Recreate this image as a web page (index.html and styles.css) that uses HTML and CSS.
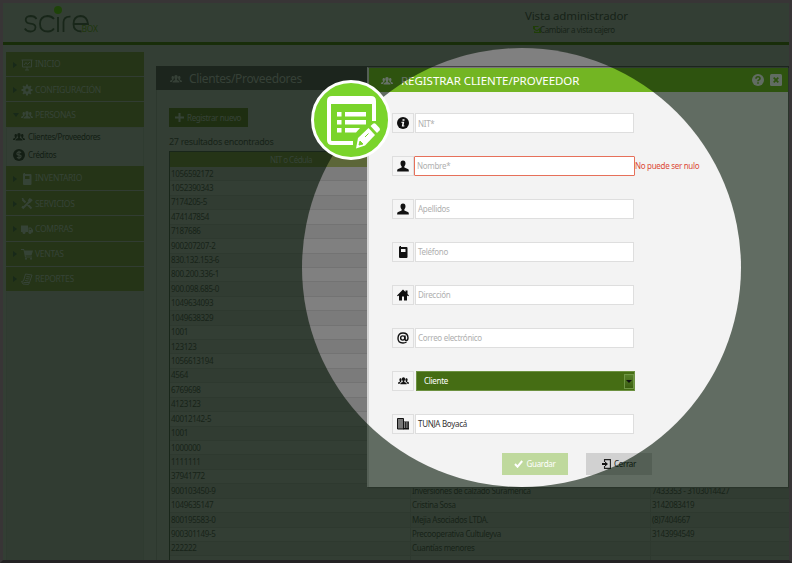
FILE: index.html
```
<!DOCTYPE html>
<html lang="es">
<head>
<meta charset="utf-8">
<title>Scire Box</title>
<link rel="stylesheet" href="styles.css">
</head>
<body>
<svg width="0" height="0" class="defs">
  <defs>
    <symbol id="group" viewBox="0 0 24 18"><path d="M12 1c2.300 0 3.400 1.700 3.400 4 0 2-.8 3.200-1.600 4v2l4 2c1 .6 1.200 1.500 1.200 3H5c0-1.500.2-2.400 1.200-3l4-2V9c-.8-.8-1.600-2-1.600-4 0-2.300 1.100-4 3.400-4zM5.500 3c1.700 0 2.500 1.200 2.500 3.200 0 1.500-.5 2.300-1 3v1.500L4.500 12.500C3.900 13 4 14 4 15H0c0-2 .2-2.700 1-3.100l3-1.400V9.200c-.6-.7-1-1.500-1-3C3 4.200 3.800 3 5.500 3zm13 0C16.800 3 16 4.200 16 6.200c0 1.500.5 2.300 1 3v1.500l2.500 1.800c.6.500.5 1.500.5 2.500h4c0-2-.2-2.700-1-3.100l-3-1.400V9.200c.6-.7 1-1.500 1-3C21 4.200 20.200 3 18.500 3z"/></symbol>
    <symbol id="user" viewBox="0 0 24 24"><path d="M12 1c3.500 0 5 2.400 5 5.500 0 2.600-1 5-2.300 6.200V15l7 3c1.600.8 2 2 2 5H.3c0-3 .4-4.200 2-5l7-3v-2.300C8 11.500 7 9.100 7 6.500 7 3.400 8.500 1 12 1z"/></symbol>
    <symbol id="phone" viewBox="0 0 24 24"><path fill-rule="evenodd" d="M5 0h3v2h11q2 0 2 2v18q0 2-2 2H6q-2 0-2-2V2h1zM8 6v6h9V6z"/></symbol>
  </defs>
</svg>
<div class="screen">
  <header class="top">
    <svg class="logo" width="78" height="32" viewBox="0 0 78 32">
      <g class="logo-line"><path d="M12.500 13Q11 10 6.500 10Q1.500 10.200 1.700 14Q2 17.300 6.500 17.600Q11.700 18 11.500 21.500Q11 25.500 6.500 25.500Q2.500 25.500 .8 22.500M30 13Q27.500 10 23.500 10Q16 10.500 16 17.700Q16 25.500 24 25.500Q28 25.500 30 22.500M34 11V26M39.500 26V16Q40 10.200 46.500 10.700M50 18H64Q63 10 56.500 10Q49.500 10.500 49.500 18Q49.500 25.500 57.500 25.500"/></g>
      <circle class="logo-dot" cx="34" cy="4" r="4"/><text class="logo-box" x="57.500" y="26">BOX</text>
    </svg>
    <div class="view">
      <div class="view-name"><span class="t">Vista administrador</span></div>
      <div class="view-switch"><svg width="8" height="8" viewBox="0 0 8 8"><path d="M0 0h6l-1 1H2v2l2 1 4-3v6H1V5l2 1h3V4L4 5.500 0 3z"/></svg><span class="t">Cambiar a vista cajero</span></div>
    </div>
  </header>
  <div class="body">
    <nav class="side">
      <div class="item"><i class="arrow"></i><svg class="ic" viewBox="0 0 24 24"><path class="ln" d="M1 2h22M3 2v14h18V2M12 16v6M8 22h8M6 12l4-5 3 4 5-5"/></svg><span class="t">INICIO</span></div>
      <div class="item"><i class="arrow"></i><svg class="ic" viewBox="0 0 24 24"><circle class="gear" cx="12" cy="12" r="5.500"/><path class="teeth" d="M12 1v5M12 18v5M1 12h5M18 12h5M4.200 4.200l3.500 3.500M16.300 16.300l3.500 3.500M4.200 19.800l3.500-3.500M16.300 7.700l3.500-3.500"/></svg><span class="t">CONFIGURACIÓN</span></div>
      <div class="item"><i class="arrow open"></i><svg class="ic"><use href="#group"/></svg><span class="t">PERSONAS</span></div>
      <div class="sub">
        <div class="subitem"><svg class="ic"><use href="#group"/></svg><span class="t">Clientes/Proveedores</span></div>
        <div class="subitem"><svg class="ic coin" viewBox="0 0 12 12"><circle cx="6" cy="6" r="6"/><path d="M8 4Q7.500 2.900 6 2.900T4 4.300T6 6T8 7.700T6 9.100T4 8M6 1.800V10.200"/></svg><span class="t">Créditos</span></div>
      </div>
      <div class="item"><i class="arrow"></i><svg class="ic"><use href="#phone"/></svg><span class="t">INVENTARIO</span></div>
      <div class="item"><i class="arrow"></i><svg class="ic" viewBox="0 0 24 24"><path class="tool" d="M3 3l6 6M13 13l8 8M3 21L18 6M22 3l-4 4-2-2 3-4M2 2l3-1M6 21l-4-4"/></svg><span class="t">SERVICIOS</span></div>
      <div class="item"><i class="arrow"></i><svg class="ic" viewBox="0 0 24 24"><path d="M0 5h14v13H0z"/><path fill-rule="evenodd" d="M15 9h5l4 5v5h-9zM17 11v3h4l-2-3z"/><circle cx="6" cy="19" r="3"/><circle cx="18" cy="19" r="3"/></svg><span class="t">COMPRAS</span></div>
      <div class="item"><i class="arrow"></i><svg class="ic" viewBox="0 0 24 24"><path d="M0 2h6l1 3h17l-3 10H9l1 2h12v2H8L5 4H0z"/><circle cx="10" cy="21.500" r="2"/><circle cx="20" cy="21.500" r="2"/></svg><span class="t">VENTAS</span></div>
      <div class="item"><i class="arrow"></i><svg class="ic" viewBox="0 0 24 24"><path class="ln" d="M9 2l13 2-5 15H5M9 2L5 16l-4 1 3 5 11 1 2-4M11 7l7 1M10 11l7 1M8 15l7 1"/></svg><span class="t">REPORTES</span></div>
    </nav>
    <main class="panel">
      <div class="panel-head"><svg class="ic"><use href="#group"/></svg><span class="t">Clientes/Proveedores</span></div>
      <div class="new"><svg width="9" height="9" viewBox="0 0 9 9"><path d="M3.500 0h2v3.500H9v2H5.500V9h-2V5.500H0v-2h3.500z"/></svg><span class="t">Registrar nuevo</span></div>
      <div class="count"><span class="t">27 resultados encontrados</span></div>
      <div class="table">
        <div class="row th"><span>NIT o Cédula</span><span></span><span></span></div>
        <div class="row"><span>1056592172</span><span></span><span></span></div>
        <div class="row"><span>1052390343</span><span></span><span></span></div>
        <div class="row"><span>7174205-5</span><span></span><span></span></div>
        <div class="row"><span>474147854</span><span></span><span></span></div>
        <div class="row"><span>7187686</span><span></span><span></span></div>
        <div class="row"><span>900207207-2</span><span></span><span></span></div>
        <div class="row"><span>830.132.153-6</span><span></span><span></span></div>
        <div class="row"><span>800.200.336-1</span><span></span><span></span></div>
        <div class="row"><span>900.098.685-0</span><span></span><span></span></div>
        <div class="row"><span>1049634093</span><span></span><span></span></div>
        <div class="row"><span>1049638329</span><span></span><span></span></div>
        <div class="row"><span>1001</span><span></span><span></span></div>
        <div class="row"><span>123123</span><span></span><span></span></div>
        <div class="row"><span>1056613194</span><span></span><span></span></div>
        <div class="row"><span>4564</span><span></span><span></span></div>
        <div class="row"><span>6769698</span><span></span><span></span></div>
        <div class="row"><span>4123123</span><span></span><span></span></div>
        <div class="row"><span>40012142-5</span><span></span><span></span></div>
        <div class="row"><span>1001</span><span></span><span></span></div>
        <div class="row"><span>1000000</span><span></span><span></span></div>
        <div class="row"><span>1111111</span><span></span><span></span></div>
        <div class="row"><span>37941772</span><span></span><span></span></div>
        <div class="row"><span>900103450-9</span><span>Inversiones de calzado Suramerica</span><span>7433353 - 3103014427</span></div>
        <div class="row"><span>1049635147</span><span>Cristina Sosa</span><span>3142083419</span></div>
        <div class="row"><span>800195583-0</span><span>Mejia Asociados LTDA.</span><span>(8)7404667</span></div>
        <div class="row"><span>900301149-5</span><span>Precooperativa Cultuleyva</span><span>3143994549</span></div>
        <div class="row"><span>222222</span><span>Cuantías menores</span><span></span></div>
        <div class="row"><span></span><span></span><span></span></div>
      </div>
    </main>
  </div>
  <section class="modal">
    <div class="modal-head">
      <svg class="ic"><use href="#group"/></svg><span class="t">REGISTRAR CLIENTE/PROVEEDOR</span>
      <svg class="help" width="12" height="12" viewBox="0 0 12 12"><circle cx="6" cy="6" r="6"/><path d="M4 4.700Q4 2.800 6 2.800T8 4.500Q8 5.400 7 5.900T6 7.200M6 8.300V9.700"/></svg>
      <svg class="close" width="12" height="12" viewBox="0 0 12 12"><rect width="12" height="12" rx="1.500"/><path d="M3.700 3.700l4.600 4.600M8.300 3.700L3.700 8.300"/></svg>
    </div>
    <div class="form">
      <div class="field"><b><svg viewBox="0 0 24 24"><circle cx="12" cy="12" r="12"/><path class="info" d="M11 4.500h4v3h-4zM9 9.500h5.500L13 17h2l-.5 2H9.500L11 11.500H8.600z"/></svg></b><p><span class="t">NIT*</span></p></div>
      <div class="field error"><b><svg><use href="#user"/></svg></b><p><span class="t">Nombre*</span></p><em><span class="t">No puede ser nulo</span></em></div>
      <div class="field"><b><svg><use href="#user"/></svg></b><p><span class="t">Apellidos</span></p></div>
      <div class="field"><b><svg><use href="#phone"/></svg></b><p><span class="t">Teléfono</span></p></div>
      <div class="field"><b><svg viewBox="0 0 24 24"><path d="M12 1l5 5V3h4v7l3 3-1.500 1.500L20 13v10h-6v-8h-4v8H4V13l-2.500 1.500L0 13z"/></svg></b><p><span class="t">Dirección</span></p></div>
      <div class="field"><b><svg class="at" viewBox="0 0 24 24"><circle cx="11.500" cy="12" r="4.200"/><path d="M16 7v7q0 3 2.500 3Q22 17 22 11.500Q21.500 2 12 2T2 12T12 22q4 0 7-2"/></svg></b><p><span class="t">Correo electrónico</span></p></div>
      <div class="field select"><b><svg class="small"><use href="#group"/></svg></b><p><span class="t">Cliente</span><i></i></p></div>
      <div class="field value"><b><svg viewBox="0 0 24 24"><path class="tower" d="M1 1h12v21H1z"/><path fill-rule="evenodd" d="M12 7h12v16H12zM14 9v2h2V9zm3.500 0v2h2V9zM21 9v2h1.500V9zM14 13v2h2v-2zm3.500 0v2h2v-2zm3.500 0v2h1.500v-2zM14 17v2h2v-2zm3.500 0v2h2v-2zm3.500 0v2h1.500v-2z"/></svg></b><p><span class="t">TUNJA Boyacá</span></p></div>
    </div>
    <div class="buttons">
      <div class="btn save"><svg width="9" height="8" viewBox="0 0 9 8"><path d="M1 4l2.500 2.700L8.200 1"/></svg><span class="t">Guardar</span></div>
      <div class="btn exit"><svg width="9" height="10" viewBox="0 0 9 10"><path d="M2.500 3V.6H8.400V9.400H2.500V7"/><path class="head" d="M0 4h3V2.500L6 5 3 7.500V6H0z"/></svg><span class="t">Cerrar</span></div>
    </div>
  </section>
  <div class="spot"></div>
  <div class="frame"></div>
  <svg class="badge" viewBox="0 0 80 80">
    <circle class="disc" cx="40" cy="40" r="38.500"/>
    <path class="sheet" d="M63 41V21q0-3-3-3H21q-3 0-3 3v39q0 3 3 3h21"/>
    <path class="ink" d="M18 18h45v6H18zM26 32h4.500v4.500H26zM34 32h21v4.500H34zM26 40h4.500v4.500H26zM34 40h21v4.500H34zM26 48h4.500v4.500H26zM34 48h15l-4 4.500H34z"/>
    <path class="ink" d="M45 68.500l2-10.500 10.500-10 6.500 7-10 10.500z"/>
    <path class="ink" d="M59.500 46l2.500-2.200q1.200-1 2.500 0l4 4.200q1 1.200 0 2.500l-2.500 2.500z"/>
    <path class="cut" d="M48 65l1-4 3 3zM54 57l3.500-3.500"/>
  </svg>
</div>
</body>
</html>
```
FILE: styles.css
```
* { box-sizing: border-box; }
body { margin: 0; font-family: "Noto Sans", "Open Sans", sans-serif; font-size: 8px; line-height: 1; letter-spacing: -.3px; color: #3c3c3c; }
.defs { position: absolute; }
.screen { position: relative; width: 792px; height: 563px; overflow: hidden; background: #808080; }
.t { white-space: nowrap; }
.ic { width: 12px; height: 12px; fill: currentColor; flex: none; }
.ln { fill: none; stroke: currentColor; stroke-width: 2; }

.top { height: 45px; border-bottom: 3px solid #3d5514; display: flex; justify-content: space-between; }
.logo { margin: 6px 0 0 24px; }
.logo-line { fill: none; stroke: #3c443c; stroke-width: 1.800; }
.logo-dot { fill: #4d8c14; }
.logo-box { font-size: 8.500px; letter-spacing: -.2px; fill: #4d6c20; }
.view { width: 104px; margin: 9px 163px 0 0; }
.view-name { font-size: 11.500px; line-height: 13px; letter-spacing: -.15px; color: #3a3a3a; }
.view-switch { display: flex; align-items: center; height: 15px; margin-left: 8px; letter-spacing: -.36px; }
.view-switch svg { fill: #4f8010; flex: none; margin-right: -1px; }

.body { display: flex; height: 518px; }
.side { width: 138px; margin: 7px 12px 0 6px; background: #7b7b7b; height: 520px; border: solid #757875; border-width: 0 1px; }
.item { display: flex; align-items: center; height: 25.200px; padding: 1px 0 0 6px; border-bottom: 1px solid #7b7b7b; margin: 0 -1px; background: #5c6638; color: #868c84; font-size: 8.500px; padding-left: 7px; }
.item .ic { margin: 0 2px 0 4px; }
.arrow { border: 3px solid transparent; border-left: 4px solid #3c4b3c; border-right: 0; width: 4px; flex: none; }
.arrow.open { border: 3px solid transparent; border-top: 4px solid #3c4b3c; border-bottom: 0; width: 6px; margin-right: -2px; }
.gear { fill: none; stroke: currentColor; stroke-width: 5; }
.teeth, .tool { stroke: currentColor; stroke-width: 4; fill: none; }
.sub { height: 38.500px; background: #808080; }
.subitem { display: flex; align-items: center; height: 18px; padding-left: 6px; gap: 3px; letter-spacing: -.38px; color: #303030; }
.coin path { fill: none; stroke: #808080; stroke-width: 1.200; }

.panel { flex: 1; height: 520px; margin-top: 21px; border-left: 1px solid #707070; }
.panel-head { height: 24px; margin-left: -1px; background: #464146; color: #868686; display: flex; align-items: center; padding: 1px 0 0 14px; gap: 7px; font-size: 12px; letter-spacing: -.35px; }
.new { display: flex; align-items: center; width: 79px; height: 19px; margin: 18px 0 0 12px; background: #4d592a; color: #858985; padding-left: 6px; gap: 3px; letter-spacing: -.35px; }
.new svg { fill: currentColor; }
.count { height: 24px; padding: 10px 0 0 12px; font-size: 9px; letter-spacing: -.32px; }
.table { margin-left: 12px; border-left: 1px solid #3f443f; border-top: 1px solid #3f443f; }
.row { display: grid; grid-template-columns: 241px 240px 1fr; height: 14.430px; background: #808080; border-bottom: 1px solid #737373; letter-spacing: -.35px; }
.row:nth-child(even) { background: #7b7b7b; }
.row span { padding: 2.500px 0 0 1px; border-right: 1px solid #737373; white-space: nowrap; }
.row.th { background: #5c6638; height: 15px; border: 0; color: #868c84; text-align: center; letter-spacing: -.5px; }
.row.th span { border: 0; padding-top: 3.500px; }

.modal { position: absolute; left: 367px; top: 67px; width: 421px; height: 420px; background: #f3f3f3; border-left: 2px solid #d5d5d5; border-top: 1px solid #777; box-shadow: 1px 1px 1px #666; }
.modal-head { height: 24px; background: #73b523; color: #fff; display: flex; align-items: center; padding: 1px 0 0 12px; font-size: 11.500px; letter-spacing: -.05px; }
.modal-head .ic { fill: #fff; margin-right: 8px; }
.help { margin: -1px 6px 0 auto; fill: #f3f3f3; }
.help path { fill: none; stroke: #73b523; stroke-width: 1.600; }
.close { margin: -1px 6px 0 0; fill: #f3f3f3; }
.close path { stroke: #73b523; stroke-width: 1.800; }
.form { padding: 21px 0 0 23px; height: 361px; }
.field { display: flex; height: 20px; margin-bottom: 22.950px; }
.field b { width: 22px; border: 1px solid #dedede; display: grid; place-items: center; margin-right: 1px; flex: none; background: #f5f5f5; }
.field b svg { width: 12px; height: 12px; fill: #111; }
.field b .small { width: 11px; }
.field p { margin: 0; width: 219px; background: #fff; border: 1px solid #dedede; padding: 1px 0 0 2px; display: flex; align-items: center; color: #b0b0b0; }
.info { fill: #fff; }
.field .at { fill: none; stroke: #111; stroke-width: 2.800; }
.tower { fill: #777; stroke: #111; stroke-width: 2; }
.field em { font-style: normal; color: #dc4a36; align-self: center; padding-top: 1px; }
.error p { width: 221px; border: 1px solid #e6705a; border-radius: 1px; margin-left: -1px; }
.select p { background: #456d14; border-color: #6c9140; color: #fff; width: 219px; margin-left: 1px; padding-left: 7px; justify-content: space-between; }
.select i { width: 10px; height: 15px; border: 1px solid #6f9545; background: linear-gradient(#568029, #3a5d10); display: grid; place-items: center; }
.select i::after { content: ""; border: 3px solid transparent; border-top: 3px solid #111; border-bottom: 0; }
.value p { color: #333; }
.buttons { display: flex; gap: 18px; padding-left: 133px; }
.btn { width: 66px; height: 22px; display: flex; align-items: center; justify-content: center; gap: 3px; }
.btn svg { fill: none; stroke: currentColor; stroke-width: 2; }
.save { background: #bfd99d; color: #fff; }
.exit { background: #d1d1d1; color: #222; }
.exit svg { stroke-width: 1.100; }
.exit .head { fill: #111; stroke: none; }

.spot { position: absolute; left: 302px; top: 48px; width: 439px; height: 439px; border-radius: 50%; box-shadow: 0 0 0 900px rgba(0, 18, 2, .6); }
.frame { position: absolute; inset: 0; border: 3px solid #383536; border-bottom-color: #232223; }
.badge { position: absolute; left: 311px; top: 80px; width: 80px; height: 80px; }
.disc { fill: #7ad42b; stroke: #fff; stroke-width: 3; }
.sheet { fill: none; stroke: #fff; stroke-width: 4; }
.ink { fill: #fff; }
.cut { fill: #7ad42b; stroke: #7ad42b; }
```
